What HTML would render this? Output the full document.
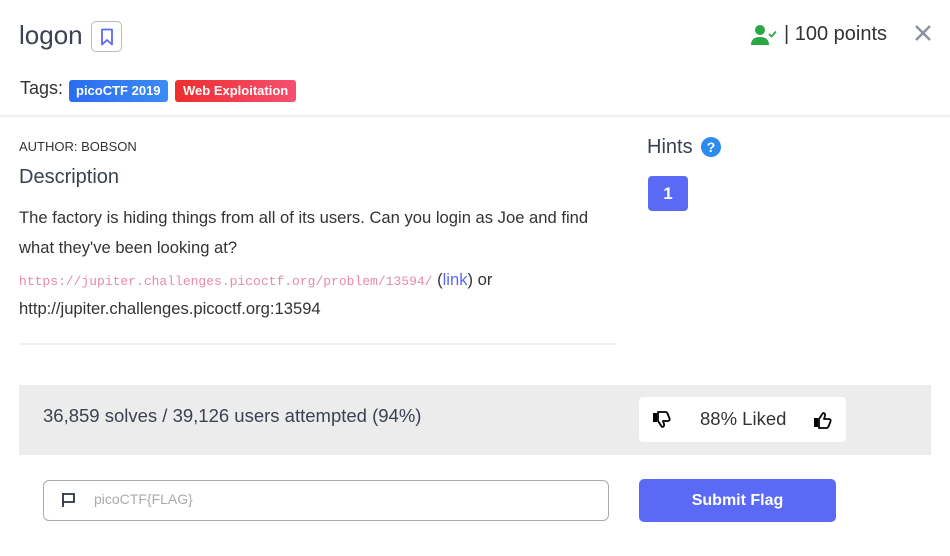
<!DOCTYPE html>
<html><head><style>
body{margin:0;width:950px;height:556px;background:#fff;font-family:"Liberation Sans",sans-serif;color:#333;position:relative;overflow:hidden}
.a{position:absolute;white-space:nowrap}
.tag{position:absolute;top:80px;height:22px;border-radius:3px;color:#fff;font-weight:bold;font-size:13px;line-height:22px;padding:0 7px}
</style></head><body>
<div class="a" style="left:19px;top:20px;font-size:26px;color:#3a4150">logon</div>
<div class="a" style="left:91px;top:21px;width:31px;height:31px;border:1px solid #bbb;border-radius:5px;box-sizing:border-box"></div>
<svg class="a" style="left:99px;top:28px" width="16" height="18" viewBox="0 0 16 18"><path d="M3 1.5h10v15l-5-4.5-5 4.5z" fill="none" stroke="#5b6af5" stroke-width="1.8" stroke-linejoin="round"/></svg>
<div class="a" style="left:20px;top:78px;font-size:18px;color:#333">Tags:</div>
<div class="tag" style="left:69px;background:linear-gradient(90deg,#2b6cf0,#3b8bf5)">picoCTF 2019</div>
<div class="tag" style="left:175px;background:linear-gradient(90deg,#ef2e2e,#f54f70);padding:0 8px">Web Exploitation</div>
<svg class="a" style="left:751px;top:24px" width="26" height="22" viewBox="0 0 26 22"><circle cx="9" cy="6" r="5" fill="#28a745"/><path d="M0 21c0-6 4-8 9-8s9 2 9 8z" fill="#28a745"/><path d="M18 10l2.5 2.5 4.5-5" fill="none" stroke="#28a745" stroke-width="1.8"/></svg>
<div class="a" style="left:784px;top:23px;font-size:20px;color:#333">| 100 points</div>
<svg class="a" style="left:914px;top:24px" width="18" height="18"><path d="M2 2l14 14M16 2L2 16" stroke="#8a90a0" stroke-width="2.4"/></svg>
<div class="a" style="left:0;top:115px;width:950px;height:2px;background:#eef0f2"></div>
<div class="a" style="left:19px;top:139px;font-size:13px;color:#333">AUTHOR: BOBSON</div>
<div class="a" style="left:19px;top:166px;font-size:20px;color:#3a4150">Description</div>
<div class="a" style="left:19px;top:203px;font-size:16.6px;line-height:30px;color:#333">The factory is hiding things from all of its users. Can you login as Joe and find<br>what they've been looking at?</div>
<div class="a" style="left:19px;top:265px;font-size:16.6px;line-height:30px"><span style="font-family:'Liberation Mono',monospace;font-size:13px;color:#e88aa8">https://jupiter.challenges.picoctf.org/problem/13594/</span> (<span style="color:#5b6af5">link</span>) or</div>
<div class="a" style="left:19px;top:298px;font-size:16.6px;line-height:22px">http://jupiter.challenges.picoctf.org:13594</div>
<div class="a" style="left:19px;top:343px;width:597px;height:2px;background:#eef0f2"></div>
<div class="a" style="left:647px;top:136px;font-size:20px;color:#3a4150">Hints</div>
<div class="a" style="left:701px;top:137px;width:20px;height:20px;border-radius:50%;background:#2b8cf0;color:#fff;font-weight:bold;font-size:14px;text-align:center;line-height:20px">?</div>
<div class="a" style="left:648px;top:176px;width:40px;height:35px;border-radius:4px;background:#5b6af5;color:#fff;font-weight:bold;font-size:17px;text-align:center;line-height:35px">1</div>
<div class="a" style="left:19px;top:385px;width:912px;height:70px;background:#ececec"></div>
<div class="a" style="left:43px;top:405px;font-size:18.5px;color:#3a4150">36,859 solves / 39,126 users attempted (94%)</div>
<div class="a" style="left:639px;top:397px;width:207px;height:45px;background:#fff;border-radius:4px"></div>
<svg class="a" style="left:652px;top:410px" width="20" height="20" viewBox="0 0 20 20"><g transform="translate(0,20) scale(1,-1)"><rect x="1" y="8" width="4" height="9" fill="#000"/><path d="M6 9l4-6c1.5 0 2.5 1 2 3l-1 3h5c1.5 0 2 1.5 1.5 2.5l-2 5c-.5 1-1 1.5-2 1.5H6z" fill="none" stroke="#000" stroke-width="1.8" stroke-linejoin="round"/></g></svg>
<div class="a" style="left:700px;top:408px;font-size:18.5px;color:#333">88% Liked</div>
<svg class="a" style="left:813px;top:410px" width="20" height="20" viewBox="0 0 20 20"><rect x="1" y="8" width="4" height="9" fill="#000"/><path d="M6 9l4-6c1.5 0 2.5 1 2 3l-1 3h5c1.5 0 2 1.5 1.5 2.5l-2 5c-.5 1-1 1.5-2 1.5H6z" fill="none" stroke="#000" stroke-width="1.8" stroke-linejoin="round"/></svg>
<div class="a" style="left:43px;top:480px;width:566px;height:41px;border:1px solid #aaa;border-radius:6px;box-sizing:border-box"></div>
<svg class="a" style="left:61px;top:492px" width="16" height="16"><path d="M2 1v14M2 2h11v8H2" fill="none" stroke="#2a3142" stroke-width="1.8"/></svg>
<div class="a" style="left:94px;top:491px;font-size:14px;color:#aaa">picoCTF{FLAG}</div>
<div class="a" style="left:639px;top:479px;width:197px;height:43px;background:#5b6af5;border-radius:5px;color:#fff;font-weight:bold;font-size:16px;text-align:center;line-height:43px">Submit Flag</div>
</body></html>
